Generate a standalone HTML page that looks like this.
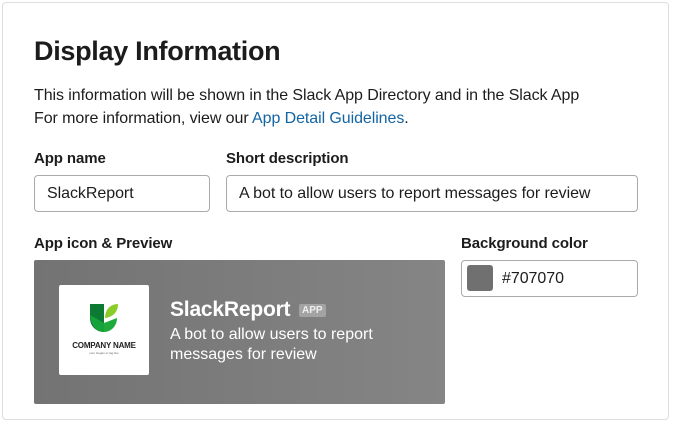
<!DOCTYPE html>
<html><head><style>
body{margin:0;width:675px;height:422px;background:#fff;font-family:"Liberation Sans",sans-serif;color:#1d1c1d;position:relative;overflow:hidden}
.card{position:absolute;left:2px;top:2px;width:665px;height:416px;border:1px solid #ddd;border-radius:4px}
.a{position:absolute;white-space:nowrap}
h1{position:absolute;left:34px;top:36px;margin:0;font-size:27px;font-weight:bold;letter-spacing:-0.3px}
.p{font-size:16px;letter-spacing:-0.08px}
.l{font-size:15px;font-weight:bold;letter-spacing:-0.1px}
.in{position:absolute;border:1px solid #aaa;border-radius:4px;font-size:16px;box-sizing:border-box;padding-left:12px;line-height:36px;letter-spacing:-0.05px}
a{color:#1264a3;text-decoration:none}
</style></head><body>
<div class="card"></div>
<h1>Display Information</h1>
<div class="a p" style="left:34px;top:87px">This information will be shown in the Slack App Directory and in the Slack App</div>
<div class="a p" style="left:34px;top:110px">For more information, view our <a>App Detail Guidelines</a>.</div>
<div class="a l" style="left:34px;top:150px">App name</div>
<div class="a l" style="left:226px;top:150px">Short description</div>
<div class="in" style="left:34px;top:175px;width:176px;height:37px">SlackReport</div>
<div class="in" style="left:226px;top:175px;width:412px;height:37px">A bot to allow users to report messages for review</div>
<div class="a l" style="left:34px;top:235px">App icon &amp; Preview</div>
<div class="a l" style="left:461px;top:235px">Background color</div>
<div style="position:absolute;left:34px;top:260px;width:411px;height:144px;background:linear-gradient(90deg,#737373,#858585);border-radius:2px"></div>
<div style="position:absolute;left:59px;top:285px;width:90px;height:90px;background:#fff;border-radius:2px">
<svg width="90" height="90" viewBox="0 0 90 90" style="position:absolute;left:0;top:0">
<path d="M31 19 h14 v28 c-8 0-14-6-14-14z" fill="#0d7a34"/>
<path d="M45 47 c7 0 13-6 13-14 l-13 5z" fill="#1faa3c"/>
<path d="M46 33 c0-8 5-14 13-14 c0 8-5 13-13 14z" fill="#8ccc2a"/>
<path d="M31 30 c1 10 6 17 14 17 l0-9z" fill="#16a23a"/>
<text x="45" y="63" font-size="8" font-weight="bold" text-anchor="middle" fill="#222" font-family="Liberation Sans" letter-spacing="-0.2">COMPANY NAME</text>
<text x="45" y="69" font-size="3" text-anchor="middle" fill="#666" font-family="Liberation Sans">your slogan or tag line</text>
</svg></div>
<div class="a" style="left:170px;top:298px;color:#fff;font-size:21px;font-weight:bold;letter-spacing:-0.2px">SlackReport</div>
<div class="a" style="left:299px;top:304px;background:#a3a3a3;color:#eee;font-size:10px;font-weight:bold;padding:1px 3px;border-radius:2px">APP</div>
<div class="a" style="left:170px;top:325px;color:#fff;font-size:16px;line-height:20px">A bot to allow users to report<br>messages for review</div>
<div class="in" style="left:461px;top:260px;width:177px;height:37px;padding-left:40px">#707070</div>
<div style="position:absolute;left:467px;top:265px;width:26px;height:26px;background:#707070;border-radius:3px"></div>
</body></html>
